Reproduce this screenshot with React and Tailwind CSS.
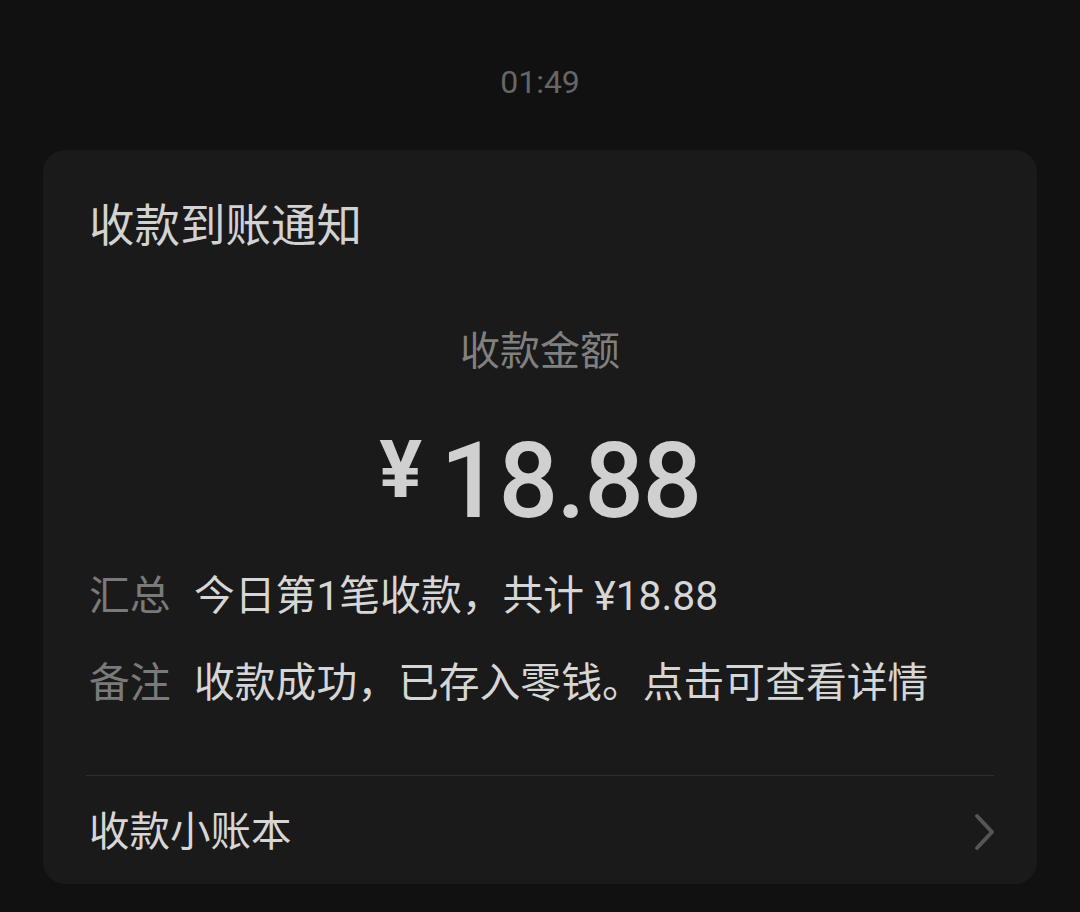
import React from 'react';

const font = { fontFamily: 'Roboto, "Noto Sans CJK SC", sans-serif' };

function Row({ label, children }) {
  return (
    <div className="flex items-center h-[56px]">
      <span className="w-[105px] shrink-0 text-[#7a7a7a]">{label}</span>
      <span className="text-[#d6d6d6]">{children}</span>
    </div>
  );
}

export default function App() {
  return (
    <div className="w-[1080px] h-[912px] bg-[#111111] overflow-hidden flex flex-col" style={font}>
      <div className="pt-[62px] text-center text-[32px] leading-[40px] text-[#666666]">01:49</div>

      <div className="mt-[48px] mx-[43px] h-[734px] rounded-[22px] bg-[#1a1a1a] flex flex-col">
        <div className="pl-[46px] pt-[49px] text-[45.5px] leading-[56px] text-[#d2d2d2]">收款到账通知</div>

        <div className="mt-[69px] text-center text-[40px] leading-[56px] text-[#808080]">收款金额</div>

        <div className="mt-[41px] h-[120px] flex items-center justify-center text-[#d0d0d0]">
          <span className="text-[80px] font-bold leading-none mr-[18px] -mt-[22px]">¥</span>
          <span className="text-[105px] font-medium leading-none tracking-[-1.5px]">18.88</span>
        </div>

        <div className="mt-[28px] pl-[46px] text-[40.8px] flex flex-col gap-[31px]">
          <Row label="汇总">今日第1笔收款，共计 ¥18.88</Row>
          <Row label="备注">收款成功，已存入零钱。点击可查看详情</Row>
        </div>

        <div className="mt-[63px] ml-[43px] mr-[43px] h-px bg-[#2e2e2e]" />

        <div className="flex-1 pt-[4px] pl-[46px] pr-[40px] flex items-center justify-between">
          <span className="text-[40.5px] text-[#d6d6d6]">收款小账本</span>
          <svg width="24" height="38" viewBox="0 0 24 38" fill="none">
            <path d="M4 3 L19 19 L4 35" stroke="#555555" strokeWidth="4" strokeLinecap="round" strokeLinejoin="round" />
          </svg>
        </div>
      </div>
    </div>
  );
}
